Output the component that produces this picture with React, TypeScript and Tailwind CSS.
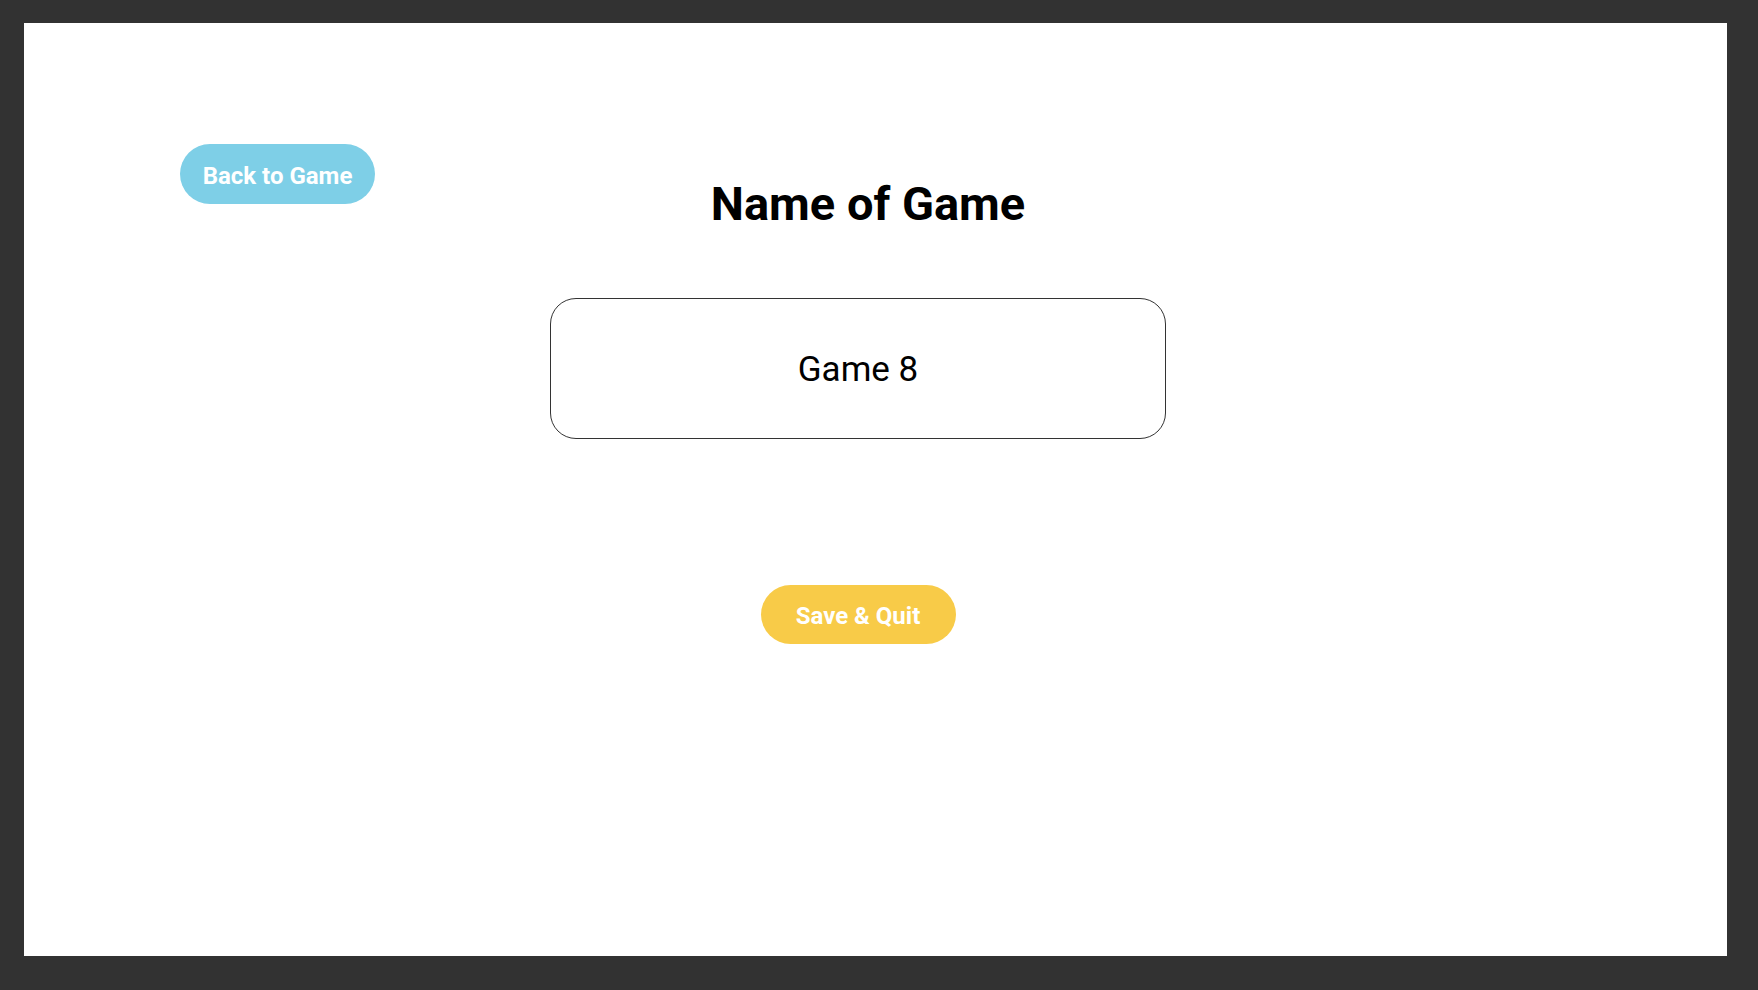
import { useState } from 'react';

export default function App() {
  const [gameName, setGameName] = useState('Game 8');

  return (
    <div className="min-h-screen bg-[#323232] pt-[23px] pl-[24px] pr-[31px] pb-[34px] font-['Roboto',sans-serif]">
      <div className="h-[933px] bg-white pt-[121px]">
        {/* Header */}
        <div className="flex items-start pl-[156px]">
          <button className="w-[195px] h-[60px] pt-[3px] rounded-full bg-[#7ecfe7] text-white text-[24px] font-bold">
            Back to Game
          </button>
          <h1 className="flex-1 mt-[36px] text-center text-[47px] leading-none font-bold text-black">
            Name of Game
          </h1>
          <div className="w-[366px]" />
        </div>

        {/* Name field + save */}
        <div className="flex flex-col items-center pr-[35px] mt-[71px]">
          <div className="w-[616px] h-[141px] pt-[4px] rounded-[26px] border border-[#333] flex items-center justify-center">
            <input
              value={gameName}
              onChange={(e) => setGameName(e.target.value)}
              className="w-full text-center text-[35px] text-black bg-transparent outline-none"
            />
          </div>

          <button className="mt-[146px] w-[195px] h-[59px] pt-[2px] rounded-full bg-[#f8cb48] text-white text-[24px] font-bold">
            Save &amp; Quit
          </button>
        </div>
      </div>
    </div>
  );
}
